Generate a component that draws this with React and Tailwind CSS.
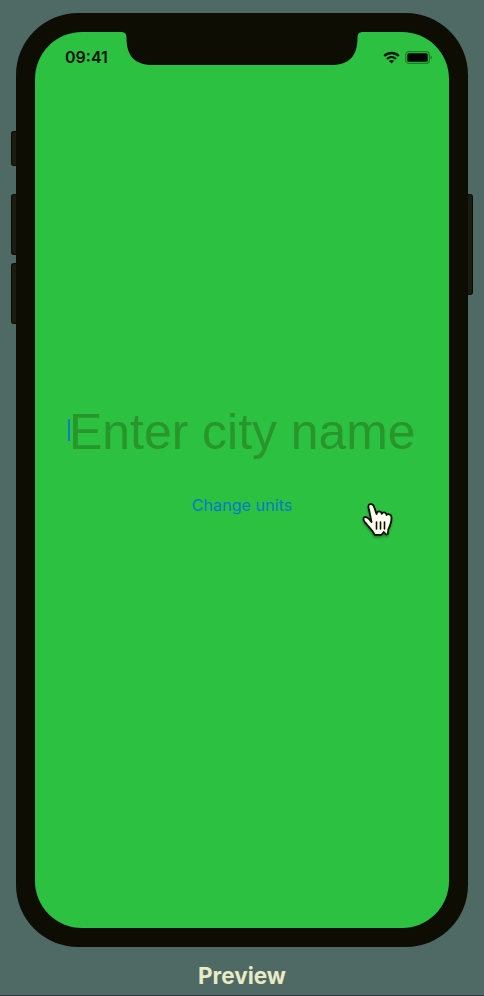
function Notch() {
  return (
    <svg className="absolute left-[86px] top-0" width="242" height="34" viewBox="0 0 242 34" fill="#0e0d04">
      <path d="M0 -1V0C4 0 5.500 2 5.500 6C5.500 24 14 33 31 33H211C228 33 236.500 24 236.500 6C236.500 2 238 0 242 0V-1Z" />
    </svg>
  );
}

function StatusBar() {
  return (
    <div className="flex h-[50px] items-center justify-between pl-[30px] pr-4">
      <span className="font-['Inter',sans-serif] text-[16px] font-semibold leading-5 text-[#041206]">09:41</span>
      <div className="flex items-center gap-[5px]">
        <svg width="17" height="13" viewBox="0 0 17 13" fill="none" stroke="#05160a">
          <path d="M1.200 5C5.300 1 11.700 1 15.800 5" strokeWidth="2.300" />
          <path d="M4 8C6.600 5.600 10.400 5.600 13 8" strokeWidth="2.200" />
          <path d="M5.900 9.900C7.300 8.600 9.700 8.600 11.100 9.900L8.500 12.500Z" fill="#05160a" stroke="none" />
        </svg>
        <svg width="28" height="13" viewBox="0 0 28 13">
          <rect x="0.700" y="0.700" width="23.600" height="11.600" rx="3" fill="none" stroke="#187e28" strokeWidth="1.200" />
          <rect x="2.300" y="2.300" width="20.400" height="8.400" rx="1.500" fill="#020502" />
          <path d="M25.500 4.500C27.500 5.200 27.500 7.800 25.500 8.500Z" fill="#187e28" />
        </svg>
      </div>
    </div>
  );
}

function HandCursor() {
  return (
    <svg
      className="absolute left-[326px] top-[469px] drop-shadow-[0_2px_1px_rgba(0,0,0,0.3)]"
      width="34"
      height="36"
      viewBox="0 0 34 36"
      strokeLinejoin="round"
      strokeLinecap="round"
    >
      <path
        d="M10.500 21L8 8.500C6.500 4.500 8 2.800 10 2.800C12.200 3 13 5 13.500 7L15.500 13C16 9.500 20.200 9.700 20.800 12.800C21.700 10.500 25.200 11 25.500 14C27.200 12.200 30.200 13.200 30.500 16.200C30.700 21.500 29.500 24 27.300 28.500L26.800 33L25 33.500L22.800 31L20.500 33.800H13.700C12 30 8.500 27 5.500 23C3 20.500 1.800 18.200 2.800 16.700C4.500 14.700 7.500 17 10.500 21Z"
        fill="#fffef0"
        stroke="#0c1005"
        strokeWidth="1.800"
      />
      <path d="M15.500 21V28M19.500 21V28M23.500 21V28" fill="none" stroke="#0c1005" strokeWidth="1.600" />
    </svg>
  );
}

function SideButton({ className }) {
  return <span className={`block w-[5px] border-[#090b08] bg-[#1b1b10] ${className}`} />;
}

export default function App() {
  return (
    <main className="h-[996px] w-[484px] overflow-hidden border-b border-[#343b45] bg-[#4f6965] pt-[13px]">
      <div className="flex pl-[11px]">
        <div className="flex flex-col pt-[118px]">
          <SideButton className="h-[35px] rounded-l-[3px] border-y border-l" />
          <SideButton className="mt-7 h-[61px] rounded-l-[3px] border-y border-l" />
          <SideButton className="mt-2 h-[61px] rounded-l-[3px] border-y border-l" />
        </div>
        <section className="h-[934px] w-[452px] rounded-[62px] bg-[#0e0d04] p-[19px]">
          <div className="relative h-[896px] w-[414px] overflow-hidden rounded-[47px] bg-[#2dc141]">
            <Notch />
            <StatusBar />
            <div className="mt-[320px] flex h-[58px] items-center pl-[33px]">
              <span className="h-[22px] w-[2px] shrink-0 -translate-y-px bg-[#0b7fc4]" />
              <span className="-ml-px translate-y-px whitespace-nowrap font-['Liberation_Sans',Arial,sans-serif] text-[49.900px] leading-[58px] text-[#28962a]">
                Enter city name
              </span>
            </div>
            <button className="mt-[35px] block w-full text-center font-['Inter',sans-serif] text-[16.200px] leading-5 text-[#087bc6]">
              Change units
            </button>
            <HandCursor />
          </div>
        </section>
        <div className="pt-[181px]">
          <SideButton className="h-[101px] rounded-r-[3px] border-y border-r" />
        </div>
      </div>
      <h1 className="mt-[15px] text-center font-['Inter',sans-serif] text-[22.500px] font-bold leading-7 text-[#e8ebc4]">Preview</h1>
    </main>
  );
}
